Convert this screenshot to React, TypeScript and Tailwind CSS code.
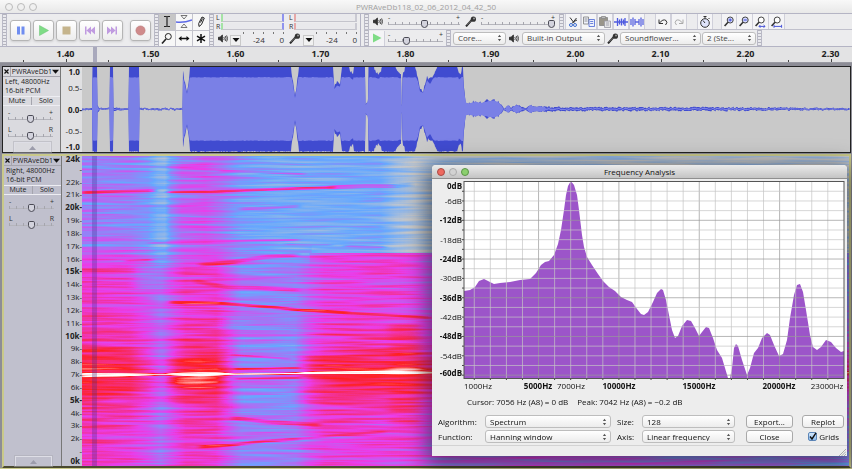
import type { ReactNode } from 'react';
import clsx from 'clsx';

/* ---------- helpers ---------- */

const gray = (v: number) => {
  const c = Math.round(v * 255);
  return `rgb(${c},${c},${c})`;
};

const noise = (n: number) => {
  const s = Math.sin(n * 127.1) * 43758.5453;
  return s - Math.floor(s);
};

/* ---------- small icons ---------- */

function Speaker() {
  return (
    <svg viewBox="0 0 10 9" className="w-[10px] h-[9px] shrink-0" fill="none" stroke="#222" strokeWidth="0.8">
      <path d="M0.5 3.2h1.6L4.4 1v7L2.1 5.8H0.5z" fill="#333" />
      <path d="M5.8 3q1 1.5 0 3M7.2 2q1.7 2.5 0 5M8.6 1.4q2 3.1 0 6.2" />
    </svg>
  );
}

function Mic() {
  return (
    <svg viewBox="0 0 12 11" className="w-[12px] h-[11px] shrink-0">
      <path d="M1 10.4L6.6 4.2" stroke="#222" strokeWidth="2" />
      <path d="M1.6 9.2L6 4.6" stroke="#aaa" strokeWidth="0.6" />
      <circle cx="8.4" cy="3.2" r="2.6" fill="#333" />
      <circle cx="9" cy="2.6" r="1" fill="#999" />
    </svg>
  );
}

function UpDown() {
  return (
    <svg viewBox="0 0 5 8" className="w-[5px] h-[8px] pointer-events-none" fill="#555">
      <path d="M2.5 0.8L4.1 3H0.9zM2.5 7.2L4.1 5H0.9z" />
    </svg>
  );
}

function Lens({ color = '#4a55d8', sign, foot }: { color?: string; sign?: 'plus' | 'minus'; foot?: 'arrows' | 'span' }) {
  return (
    <svg viewBox="0 0 14 14" className="w-[14px] h-[14px]" fill="none">
      <circle cx="8.2" cy="5" r="3" fill={sign ? '#d5daff' : '#fff'} stroke="#444" />
      <path d="M6 7.2L2.6 11" stroke="#333" strokeWidth="1.6" />
      {sign && <path d="M6.6 5h3.2" stroke={color} strokeWidth="1.1" />}
      {sign === 'plus' && <path d="M8.2 3.4v3.2" stroke={color} strokeWidth="1.1" />}
      {foot === 'arrows' && <path d="M6 11.4h6M7.4 10L6 11.4l1.4 1.4M10.6 10l1.4 1.4-1.4 1.4" stroke={color} />}
      {foot === 'span' && <path d="M5 11.4h7.6M5 9.8v3M12.6 9.8v3" stroke={color} />}
    </svg>
  );
}

/* ---------- shared controls ---------- */

function Grip() {
  return (
    <div className="w-[5px] shrink-0 self-stretch border-x border-[#b9b9c6] bg-[repeating-linear-gradient(#b4b4be_0_1px,#e9e9ee_1px_3px)]" />
  );
}

interface SliderProps {
  label: string;
  value: number;
  marks?: [string, string];
  className?: string;
}

function Slider({ label, value, marks = ['-', '+'], className }: SliderProps) {
  return (
    <div className={clsx('flex flex-col', className)}>
      <div className="flex justify-between h-[5px] text-[7px] leading-[5px] font-medium text-[#333]">
        <span>{marks[0]}</span>
        <span>{marks[1]}</span>
      </div>
      <input
        type="range"
        aria-label={label}
        defaultValue={value}
        className="block w-full h-[8px] appearance-none bg-[repeating-linear-gradient(90deg,#a5a5ad_0_1px,transparent_1px_7px),linear-gradient(#b5b5bc,#b5b5bc)] bg-[size:100%_3px,100%_1px] bg-[position:0_2px,0_4px] bg-no-repeat [&::-webkit-slider-thumb]:appearance-none [&::-webkit-slider-thumb]:w-[7px] [&::-webkit-slider-thumb]:h-[8px] [&::-webkit-slider-thumb]:rounded-t-[2px] [&::-webkit-slider-thumb]:rounded-b-[4px] [&::-webkit-slider-thumb]:border [&::-webkit-slider-thumb]:border-[#4a4a55] [&::-webkit-slider-thumb]:bg-[#d3d3dd]"
      />
    </div>
  );
}

interface PickerProps {
  label: string;
  value: string;
  id?: string;
  className?: string;
}

function Picker({ label, value, id, className }: PickerProps) {
  return (
    <div
      className={clsx(
        'grid items-center rounded-[3px] border border-[#bdbdbd] bg-gradient-to-b from-white to-[#ececec] shrink-0',
        className,
      )}
    >
      <select
        id={id}
        aria-label={id ? undefined : label}
        defaultValue={value}
        className="col-start-1 row-start-1 w-full h-full appearance-none bg-transparent pl-[4px] pr-2 leading-none"
      >
        <option>{value}</option>
      </select>
      <div className="col-start-1 row-start-1 justify-self-end pr-[3px] pointer-events-none">
        <UpDown />
      </div>
    </div>
  );
}

/* ---------- toolbars ---------- */

const transport: { label: string; icon: ReactNode }[] = [
  { label: 'Pause', icon: <path d="M4 3.500h3v8H4zM8.500 3.500h3v8h-3z" fill="#6f8df0" /> },
  { label: 'Play', icon: <path d="M3.500 2.500l9 5-9 5z" fill="#7fdc86" stroke="#66c070" strokeWidth="0.5" /> },
  { label: 'Stop', icon: <path d="M3.500 3.500h8v8h-8z" fill="#c5b48c" /> },
  { label: 'Skip to Start', icon: <path d="M3 3.500h1.500v8H3zM9 3.500v8l-4.500-4zM13 3.500v8l-4.500-4z" fill="#c09be0" /> },
  { label: 'Skip to End', icon: <path d="M2 3.500v8l4.500-4zM6 3.500v8l4.500-4zM10.500 3.500H12v8h-1.500z" fill="#c09be0" /> },
  { label: 'Record', icon: <circle cx="7.5" cy="7.5" r="4.6" fill="#cf8a8a" stroke="#bb7777" strokeWidth="0.6" /> },
];

function TransportBar() {
  return (
    <div className="flex items-center shrink-0 pl-[2px]">
      <Grip />
      <div className="flex items-center gap-[2px] pl-[3px] pr-[3px]">
        {transport.map(({ label, icon }) => (
          <button
            key={label}
            aria-label={label}
            className="w-[21px] h-[21px] grid place-items-center rounded-[3px] border border-[#b5b5b5] bg-gradient-to-b from-white to-[#ededed] shadow-sm last:ml-[5px]"
          >
            <svg viewBox="0 0 15 15" className="w-[15px] h-[15px]">{icon}</svg>
          </button>
        ))}
      </div>
    </div>
  );
}

const tools: { label: string; icon: ReactNode }[] = [
  { label: 'Selection', icon: <path d="M5 2.500h2l1 .5 1-.5h2M5 12.500h2l1-.5 1 .5h2M8 3v9" stroke="#222" strokeWidth="1.200" fill="none" /> },
  {
    label: 'Envelope',
    icon: (
      <g fill="none">
        <path d="M5 1.500h6L8 5zM5 13.500h6L8 10z" stroke="#555" strokeWidth="0.8" />
        <path d="M0 8q8 1 16-2" stroke="#5b68e6" strokeWidth="1.600" />
      </g>
    ),
  },
  { label: 'Draw', icon: <path d="M6 12.500l-.3-3L9 3l2.300 1L8.500 10.500zM7.500 8.500l2-4" stroke="#222" fill="none" /> },
  {
    label: 'Zoom',
    icon: (
      <g fill="none" stroke="#222">
        <circle cx="9.300" cy="5.500" r="3" />
        <path d="M7 8l-4 4.500" strokeWidth="1.600" />
      </g>
    ),
  },
  { label: 'Time Shift', icon: <path d="M2.500 7.500L5.500 5v1.800h5V5l3 2.500-3 2.500V8.200h-5V10z" fill="#111" /> },
  { label: 'Multi', icon: <path d="M8 3v9M4 5.200l8 4.600M12 5.200l-8 4.600" stroke="#111" strokeWidth="1.500" /> },
];

function ToolsBar() {
  return (
    <div className="flex shrink-0">
      <Grip />
      <div className="grid grid-cols-3 gap-px bg-[#c4c4cc]">
        {tools.map(({ label, icon }, i) => (
          <button
            key={label}
            aria-label={label}
            className={clsx('w-[16px] grid place-items-center', i === 0 ? 'bg-[#c6c6c6]' : 'bg-[#f7f7f7]')}
          >
            <svg viewBox="0 0 16 15" className="w-[16px] h-[15px]">{icon}</svg>
          </button>
        ))}
      </div>
    </div>
  );
}

function Meter({ label, icon, color }: { label: string; icon: ReactNode; color: 'green' | 'red' }) {
  return (
    <div className="w-[73px] flex flex-col pl-[2px] pr-[3px]">
      {['L', 'R'].map((channel) => (
        <div key={channel} className="flex items-center h-[8px] mb-px text-[7px] leading-none text-[#333]">
          <span className="w-[5px]">{channel}</span>
          <span
            className={clsx(
              'flex-1 h-full border-l-2 border-b border-b-[#c4c4cc] bg-[#e9e9ec] border-r-2',
              color === 'green' ? 'border-l-[#a5e3a5] border-r-[#8f93ee]' : 'border-l-[#e6a8a8] border-r-[#c9c9d2]',
            )}
          />
        </div>
      ))}
      <div className="flex items-end gap-[2px] h-[15px] text-[8px] leading-none text-[#333]">
        <span className="h-[14px] w-[12px] flex items-center justify-end">{icon}</span>
        <button aria-label={`${label} options`} className="w-[11px] h-[11px] grid place-items-center border border-[#c9c9c9] bg-[#f1f1f1]">
          <svg viewBox="0 0 8 6" className="w-[8px] h-[6px]"><path d="M0.500 1h7L4 5z" fill="#111" /></svg>
        </button>
        <div className="flex-1 flex flex-col justify-between h-[14px]">
          <div className="flex justify-between h-[2px]">
            {[0, 1, 2, 3, 4].map((t) => <i key={t} className="w-px bg-[#777]" />)}
          </div>
          <div className="flex justify-between pl-[10px] pb-[2px]">
            <span>-24</span>
            <span>0</span>
          </div>
        </div>
      </div>
    </div>
  );
}

const editIcons: { label: string; gap?: boolean; icon: ReactNode }[] = [
  {
    label: 'Cut',
    icon: (
      <g fill="none">
        <path d="M4 2.500l4.500 6M10.500 3L6 8.500M8 6.500l3-1.500" stroke="#333" />
        <circle cx="5" cy="10" r="1.500" stroke="#3f6fd0" />
        <circle cx="9" cy="10" r="1.500" stroke="#3f6fd0" />
      </g>
    ),
  },
  {
    label: 'Copy',
    icon: (
      <g fill="#eef1fb" stroke="#888" strokeWidth="0.9">
        <path d="M1.500 2h5v7h-5zM2.500 4h3M2.500 6h3" />
        <path d="M7 4.500h5.500v7H7zM8.200 6.500h3M8.200 8.500h3" stroke="#5b75d8" />
      </g>
    ),
  },
  {
    label: 'Paste',
    icon: (
      <g strokeWidth="0.8">
        <path d="M1.500 2.500h8v8h-8z" fill="#99958a" stroke="#858585" />
        <path d="M3.500 1.500h4v2h-4z" fill="#bbb" stroke="#888" />
        <path d="M6.500 6h6v6.500h-6zM8 8h3M8 10h3" fill="#e2e2e4" stroke="#9a9aa5" />
      </g>
    ),
  },
  { label: 'Trim', icon: <path d="M0 7h14M3.500 3v8M5.500 4.500v5M7.500 3.500v7M9.500 4.500v5M11 3v8" stroke="#4f5be0" strokeWidth="1.300" /> },
  { label: 'Silence', icon: <path d="M1 4v6M3 2.500v9M5 4v6M5 7h4M9 4v6M11 2.500v9M13 4v6" stroke="#5b66e0" strokeWidth="1.300" /> },
  { label: 'Undo', gap: true, icon: <path d="M3 4.500v4h4M3.500 8Q7 3.500 10 5.500q2 2-.5 4.500" stroke="#333" fill="none" /> },
  { label: 'Redo', icon: <path d="M11 4.500v4H7M10.500 8Q7 3.500 4 5.500q-2 2 .5 4.500" stroke="#aaa" fill="none" /> },
  {
    label: 'Sync-Lock',
    gap: true,
    icon: (
      <g fill="none" stroke="#333">
        <circle cx="7" cy="8" r="4.300" fill="#dfe4fb" />
        <path d="M7 3.500V1.500M5.500 1.500h3M10.500 4l1-1M7 8L5 5.500" />
      </g>
    ),
  },
];

function EditBar() {
  return (
    <div className="flex items-stretch">
      {editIcons.map(({ label, gap, icon }) => (
        <button
          key={label}
          aria-label={label}
          className={clsx('w-[16px] grid place-items-center border-x border-[#d0d0da] bg-[#f4f4f6]', gap && 'ml-[10px]')}
        >
          <svg viewBox="0 0 14 14" className="w-[14px] h-[14px]">{icon}</svg>
        </button>
      ))}
      <button aria-label="Zoom In" className="w-[16px] ml-[8px] border-x border-[#d0d0da] bg-[#f4f4f6]"><Lens sign="plus" /></button>
      <button aria-label="Zoom Out" className="w-[16px] border-r border-[#d0d0da] bg-[#f4f4f6]"><Lens sign="minus" /></button>
      <button aria-label="Fit Selection" className="w-[16px] border-r border-[#d0d0da] bg-[#f4f4f6]"><Lens foot="arrows" /></button>
      <button aria-label="Fit Project" className="w-[16px] border-r border-[#d0d0da] bg-[#f4f4f6]"><Lens foot="span" /></button>
    </div>
  );
}

function Toolbars() {
  return (
    <div className="flex h-[34px] border-y border-[#b4b4c4] bg-[#ececee] overflow-hidden">
      <TransportBar />
      <ToolsBar />
      <div className="flex shrink-0">
        <Grip />
        <Meter label="Output meter" icon={<Speaker />} color="green" />
        <Meter label="Input meter" icon={<Mic />} color="red" />
      </div>
      <div className="flex-1 flex flex-col border-l border-[#b4b4c4] pl-[3px]">
        <div className="flex items-center h-[16px] border-b border-[#c0c0cc]">
          <Grip />
          <div className="flex items-center pl-[4px]">
            <Speaker />
            <Slider label="Output volume" value={50} className="w-[72px] ml-[5px]" />
            <div className="ml-[5px]"><Mic /></div>
            <Slider label="Input volume" value={100} className="w-[74px] ml-[4px] mr-[4px]" />
          </div>
          <Grip />
          <div className="flex self-stretch pl-px">
            <EditBar />
          </div>
        </div>
        <div className="flex items-center h-[16px] text-[8px] text-[#444]">
          <Grip />
          <button aria-label="Play at speed" className="w-[16px] h-[15px] grid place-items-center border-r border-[#d0d0da] bg-[#f4f4f6]">
            <svg viewBox="0 0 10 10" className="w-[10px] h-[10px]"><path d="M1 0.500l8.500 4.500L1 9.500z" fill="#7fdc86" /></svg>
          </button>
          <Slider label="Playback speed" value={32} className="w-[55px] mx-[3px]" />
          <Grip />
          <Picker label="Audio host" value="Core..." className="w-[53px] h-[13px] ml-[2px]" />
          <div className="w-[16px] flex justify-center"><Speaker /></div>
          <Picker label="Output device" value="Built-in Output" className="w-[83px] h-[13px]" />
          <div className="w-[15px] flex justify-center"><Mic /></div>
          <Picker label="Input device" value="Soundflower..." className="w-[81px] h-[13px]" />
          <Picker label="Input channels" value="2 (Ste..." className="w-[54px] h-[13px] ml-px mr-px" />
          <Grip />
        </div>
      </div>
    </div>
  );
}

/* ---------- time ruler ---------- */

const times = ['1.40', '1.50', '1.60', '1.70', '1.80', '1.90', '2.00', '2.10', '2.20', '2.30'];

function TimeRuler() {
  return (
    <div className="relative flex h-[16px] pl-[23px] overflow-hidden bg-[#e3e3e4] border-b border-[#9a9aa2]">
      {times.map((time) => (
        <div key={time} className="w-[85px] shrink-0 flex flex-col justify-between">
          <span className="text-center text-[9px] leading-[14px] h-[12px] font-bold text-[#222]">{time}</span>
          <div className="flex items-end justify-between">
            <i className="w-px h-[2px] bg-[#444]" />
            <i className="w-px h-[3px] bg-[#444]" />
            <i />
          </div>
        </div>
      ))}
      <div className="absolute left-[93px] top-0 w-[4px] h-full bg-[#a9a9bc]" />
    </div>
  );
}

/* ---------- tracks ---------- */

interface TrackPanelProps {
  channel: string;
  selected?: boolean;
}

function TrackPanel({ channel, selected }: TrackPanelProps) {
  return (
    <div
      className={clsx(
        'w-[58px] shrink-0 flex flex-col text-[8px] leading-[10px] text-[#222] border-r border-[#777]',
        selected ? 'bg-[#c0c0cd]' : 'bg-[#dadadf]',
      )}
    >
      <div className="flex items-center h-[10px] border-b border-[#a5a5ae]">
        <button aria-label="Close track" className="w-[10px] h-full grid place-items-center border-r border-[#a5a5ae]">
          <svg viewBox="0 0 5 5" className="w-[5px] h-[5px]"><path d="M0.500 0.500l4 4M4.500 0.500l-4 4" stroke="#111" strokeWidth="1.200" /></svg>
        </button>
        <button className="flex-1 flex items-center justify-between px-px text-[7px]">
          PWRAveDb1
          <svg viewBox="0 0 8 5" className="w-[7px] h-[5px]"><path d="M0 0.500h8L4 5z" fill="#111" /></svg>
        </button>
      </div>
      <div className="flex flex-col pl-[2px] text-[7px] leading-[9px] h-[19px]">
        <span>{channel}, 48000Hz</span>
        <span>16-bit PCM</span>
      </div>
      <div className="flex border-y border-[#ededf2] text-[7px]">
        <button className="flex-1 h-[8px] leading-[8px] border-r border-[#a5a5ae]">Mute</button>
        <button className="flex-1 h-[8px] leading-[8px]">Solo</button>
      </div>
      <Slider label={`${channel} gain`} value={50} className="w-[45px] ml-[5px] mt-[4px]" />
      <Slider label={`${channel} pan`} value={50} marks={['L', 'R']} className="w-[45px] ml-[5px] mt-[4px]" />
      <button
        aria-label="Collapse track"
        className="w-[37px] h-[10px] mt-auto ml-[11px] grid place-items-center border border-[#dedee6] border-b-0 outline outline-[#a9a9b4]/50"
      >
        <svg viewBox="0 0 7 4" className="w-[7px] h-[4px]"><path d="M3.500 0L7 4H0z" fill="#9c9cab" /></svg>
      </button>
    </div>
  );
}

/* half-height of the signal, in pixels either side of zero */
const envelope: [number, number][] = [
  [82, 1], [92, 1], [92.5, 43], [97, 43], [97.5, 4], [100, 1], [109.5, 1], [110, 43], [113, 43], [113.5, 2],
  [122, 1], [128.5, 1], [129, 43], [139, 43], [139.5, 1], [182.5, 1], [183, 39], [185, 29], [187, 19], [189, 32], [190, 43],
  [291, 43], [293, 30], [295, 14], [297, 27], [299, 43], [333, 43], [334.5, 25], [337, 29], [340, 28],
  [342, 43], [349, 43], [351, 38], [353, 36], [354, 43], [365, 43], [365.5, 5], [368, 10], [368.5, 43],
  [374, 43], [376, 38], [379, 37], [382, 43], [395, 43], [399, 38], [401, 38], [401.3, 5], [402, 5],
  [402.6, 38], [405, 43], [415, 43], [418, 34], [420, 22], [423, 20], [427, 35], [430, 31], [433, 37],
  [438, 43], [457, 43], [459, 36], [461, 38], [462, 43], [463, 42], [464, 22], [466, 8], [468, 7], [475, 9],
  [482, 8], [488, 10], [493, 11], [498, 9], [501, 5], [504, 1], [508, 5], [511, 2], [517, 5], [521, 3],
  [526, 1], [530, 5], [535, 3], [545, 3], [560, 2], [700, 2], [850, 1],
];

function amplitude(x: number) {
  const i = envelope.findIndex(([px]) => px > x);
  if (i <= 0) return envelope[envelope.length - 1][1];
  const [x0, a0] = envelope[i - 1];
  const [x1, a1] = envelope[i];
  return a0 + ((a1 - a0) * (x - x0)) / (x1 - x0);
}

function outline(height: (x: number) => number) {
  const top: string[] = [];
  const bottom: string[] = [];
  for (let x = 82; x < 850; x += 0.5) {
    const h = height(x);
    const drift = amplitude(x) < 3 ? (noise(Math.floor(x / 2)) - 0.5) * 1.4 : 0;
    top.push(`${x} ${(109 - h + drift).toFixed(1)}`);
    bottom.unshift(`${x} ${(109 + h + drift).toFixed(1)}`);
  }
  return `M${top.join('L')}L${bottom.join('L')}z`;
}

const peakPath = outline((x) => {
  const a = amplitude(x);
  const jitter = a > 12 ? (a < 42 ? 4 : 1) : a * 0.4;
  return Math.max(0.6, a - noise(Math.floor(x)) * jitter);
});

const rmsPath = outline((x) => {
  const a = amplitude(x);
  return a < 3 ? a * 0.3 : Math.min(32, a * 0.82) - noise(Math.floor(x / 2) + 9) * 0.6;
});

function Waveform() {
  return (
    <svg viewBox="82 67 768 85" preserveAspectRatio="none" className="flex-1 min-w-0 h-[85px] bg-[#c9c9c9]">
      <path d={peakPath} fill="#404bd0" />
      <path d={rmsPath} fill="#7a80e6" />
    </svg>
  );
}

/* horizontal level profiles: [x, level] */
const upperLevels: [number, number][] = [
  [82, 0.37], [130, 0.34], [148, 0.29], [158, 0.19], [165, 0.17], [171, 0.3], [182, 0.4], [205, 0.44],
  [222, 0.38], [240, 0.29], [280, 0.22], [350, 0.23], [380, 0.22], [396, 0.12], [415, 0.05], [432, 0.08], [850, 0.05],
];
const lowerLevels: [number, number][] = [
  [82, 0.54], [130, 0.51], [148, 0.45], [161, 0.38], [172, 0.45], [186, 0.53], [216, 0.53], [230, 0.44],
  [242, 0.36], [296, 0.35], [310, 0.43], [325, 0.49], [350, 0.5], [418, 0.49], [432, 0.42], [600, 0.42], [850, 0.32],
];
const glowLevels: [number, number][] = [
  [82, 1], [130, 0.8], [156, 0.25], [164, 0.15], [178, 0.7], [200, 1], [216, 0.9], [234, 0.2], [294, 0.15], [315, 0.7],
  [340, 0.9], [400, 0.9], [432, 0.8], [850, 0.8],
];

function Levels({ id, points }: { id: string; points: [number, number][] }) {
  return (
    <linearGradient id={id} gradientUnits="userSpaceOnUse" x1="82" x2="850" y1="0" y2="0">
      {points.map(([x, v]) => <stop key={x} offset={(x - 82) / 768} stopColor={gray(v)} />)}
    </linearGradient>
  );
}

/* [path, width, strength] */
const sweeps: [string, number, number][] = [
  ['M82 192.500L125 191L155 190.500', 3, 0.45],
  ['M168 192L215 191.500L280 189L335 187.500', 2.5, 0.45],
  ['M330 187.500L365 186L395 186', 4, 0.25],
  ['M395 186L412 184.500', 4, 0.15],
  ['M220 171L260 172L305 174', 2.5, 0.22],
  ['M240 209L280 207L300 206', 3, 0.22],
  ['M150 243L235 241L298 240', 2, 0.22],
  ['M285 244L332 245', 1.5, 0.22],
  ['M345 246L385 247', 2, 0.25],
  ['M125 261L152 260', 2, 0.35],
  ['M82 265L110 265', 3, 0.2],
  ['M200 265L232 262L265 257L298 255', 4, 0.28],
  ['M195 281L225 287L260 288L300 290', 4, 0.25],
  ['M170 302L215 303L270 307L300 310L350 313', 3, 0.5],
  ['M350 313L385 315L432 318', 2.5, 0.35],
  ['M310 319L350 319', 2, 0.3],
  ['M110 305L160 305', 2, 0.25],
  ['M232 355L290 359', 2, 0.3],
  ['M235 369L300 368', 2, 0.45],
  ['M235 379L300 378', 2, 0.4],
  ['M232 418L270 422L320 425', 4, 0.3],
  ['M200 447L232 445L265 441L300 439', 3, 0.4],
  ['M300 439L340 435L385 432', 2.5, 0.22],
  ['M82 400L110 399', 2, 0.2],
  ['M355 264L385 264', 2, 0.2],
  ['M100 466L140 466', 2, 0.4],
];

function Spectrogram() {
  return (
    <svg viewBox="82 156 768 310" preserveAspectRatio="none" className="absolute inset-0 w-full h-full">
      <defs>
        <Levels id="upper" points={upperLevels} />
        <Levels id="lower" points={lowerLevels} />
        <Levels id="glow-x" points={glowLevels} />
        <linearGradient id="fade" x1="0" x2="0" y1="0" y2="1">
          <stop offset="0" stopColor="#000" />
          <stop offset="0.12" stopColor="#fff" />
        </linearGradient>
        <linearGradient id="glow" x1="0" x2="0" y1="0" y2="1">
          <stop offset="0" stopColor="#fff" stopOpacity="0" />
          <stop offset="0.3" stopColor="#fff" stopOpacity="0.18" />
          <stop offset="0.42" stopColor="#fff" stopOpacity="0.42" />
          <stop offset="0.5" stopColor="#fff" stopOpacity="0.52" />
          <stop offset="0.58" stopColor="#fff" stopOpacity="0.42" />
          <stop offset="0.72" stopColor="#fff" stopOpacity="0.16" />
          <stop offset="1" stopColor="#fff" stopOpacity="0" />
        </linearGradient>
        <mask id="lower-mask" maskUnits="userSpaceOnUse" x="82" y="156" width="768" height="310">
          <rect x="82" y="243" width="230" height="223" fill="url(#fade)" />
          <rect x="310" y="253" width="540" height="213" fill="#fff" />
        </mask>
        <mask id="glow-mask" maskUnits="userSpaceOnUse" x="82" y="156" width="768" height="310">
          <rect x="82" y="156" width="768" height="310" fill="url(#glow-x)" />
        </mask>
        <filter id="soft" x="-20%" y="-300%" width="140%" height="700%" filterUnits="objectBoundingBox">
          <feGaussianBlur stdDeviation="3 0.7" />
        </filter>
        <filter id="softer" x="-20%" y="-50%" width="140%" height="200%">
          <feGaussianBlur stdDeviation="5 2" />
        </filter>
        {/* level + streaky noise, mapped through the gray-blue-magenta-red-white colour ramp */}
        <filter id="ramp" filterUnits="userSpaceOnUse" x="82" y="156" width="768" height="310" colorInterpolationFilters="sRGB">
          <feTurbulence type="fractalNoise" baseFrequency="0.014 0.38" numOctaves="2" seed="7" />
          <feColorMatrix values="1 0 0 0 0  1 0 0 0 0  1 0 0 0 0  0 0 0 0 1" result="streaks" />
          <feComposite in="SourceGraphic" in2="streaks" operator="arithmetic" k1="0" k2="1" k3="0.38" k4="-0.19" />
          <feColorMatrix values="1 0 0 0 0  0 1 0 0 0  0 0 1 0 0  0 0 0 0 1" />
          <feComponentTransfer>
            <feFuncR type="table" tableValues="0.79 0.4 0.92 1 1" />
            <feFuncG type="table" tableValues="0.79 0.66 0.24 0.13 1" />
            <feFuncB type="table" tableValues="0.79 1 0.92 0.12 1" />
          </feComponentTransfer>
        </filter>
      </defs>
      <g filter="url(#ramp)">
        <rect x="82" y="156" width="768" height="310" fill="url(#upper)" />
        <rect x="82" y="156" width="768" height="310" fill="url(#lower)" mask="url(#lower-mask)" />
        <g filter="url(#softer)">
          <rect x="138" y="266" width="26" height="24" fill={gray(0.34)} opacity="0.7" />
          <rect x="238" y="338" width="60" height="30" fill={gray(0.24)} opacity="0.6" />
          <rect x="238" y="386" width="58" height="24" fill={gray(0.24)} opacity="0.6" />
          <rect x="235" y="292" width="62" height="10" fill={gray(0.28)} opacity="0.6" />
          <rect x="228" y="316" width="64" height="12" fill={gray(0.28)} opacity="0.5" />
        </g>
        <rect x="82" y="306" width="768" height="136" fill="url(#glow)" mask="url(#glow-mask)" />
        <g filter="url(#softer)" fill="#fff">
          {[326, 335, 344, 354, 389, 398, 408, 420].map((y) => (
            <rect key={y} x="390" y={y} width="28" height="4" opacity="0.3" />
          ))}
          <ellipse cx="196" cy="380" rx="26" ry="5" opacity="0.3" />
          <ellipse cx="405" cy="371" rx="18" ry="5" opacity="0.5" />
        </g>
        {sweeps.map(([d, width, strength]) => (
          <path key={d} d={d} fill="none" stroke="#fff" strokeWidth={width} opacity={strength} filter="url(#soft)" />
        ))}
        <g filter="url(#soft)">
          <path d="M82 372.500L120 373L150 373.500L163 374L172 373L200 372L222 372.500L234 373.500L300 372.500L312 371.500L350 371L400 370.500L432 371.500L850 371.500L850 373.500L432 373.500L400 374L350 374L312 374L300 374L234 375L222 375.500L200 376.500L172 375.500L163 375L150 375.500L120 376.500L82 377z" fill="#fff" />
        </g>
        <path d="M82 374.500H150L163 374.500L180 374L230 374.500L300 373.500L330 372.500L432 372.500H850" stroke="#fff" strokeWidth="1.500" fill="none" opacity="0.9" />
      </g>
    </svg>
  );
}

const khz = Array.from({ length: 25 }, (_, i) => 24 - i);

function Tracks() {
  return (
    <div className="flex-1 flex flex-col bg-[#8d8d96] pt-[3px]">
      <div className="flex ml-[2px] mr-px border border-[#222] h-[87px]">
        <TrackPanel channel="Left" />
        <div className="w-[21px] shrink-0 flex flex-col bg-[#e0e0e2] text-right text-[8px] leading-[10px] text-[#222]">
          <b className="h-[10px]">1.0&nbsp;</b>
          <span className="flex-1 flex items-center justify-end">0.5-</span>
          <b className="flex-1 flex items-center justify-end">0.0-</b>
          <span className="flex-1 flex items-center justify-end">-0.5-</span>
          <b className="h-[10px]">-1.0&nbsp;</b>
        </div>
        <Waveform />
      </div>
      <div className="flex-1 flex mt-px ml-[2px] mr-px border-2 border-[#c9c98a] border-b-[#4a4a30]">
        <TrackPanel channel="Right" selected />
        <div className="w-[20px] shrink-0 flex flex-col bg-[#c3c3cf] text-[8px] leading-[8px] text-[#222] pb-[2px]">
          {khz.map((k) => (
            <div
              key={k}
              className={clsx(
                'flex items-center justify-end min-h-0 h-0',
                k === 24 || k === 0 ? 'grow' : 'grow-2',
                (k % 5 === 0 || k === 24) && 'font-bold',
              )}
            >
              <span className="whitespace-nowrap">
                {k === 23 || k === 1 ? '' : `${k}k`}
                {k === 24 || k === 0 ? <>&nbsp;</> : '-'}
              </span>
            </div>
          ))}
        </div>
        <div className="relative flex-1 overflow-hidden">
          <Spectrogram />
          <div className="absolute left-[10px] top-0 w-[5px] h-full bg-[#3a2a8a]/30" />
        </div>
      </div>
      <div className="h-px bg-[#c9c98a]" />
    </div>
  );
}

/* ---------- frequency analysis window ---------- */

const spectrum =
  '464,291 470,290 475,287 479,281 484,279 488,281 494,284 500,283 510,282 520,280 530,279 536,273 541,265 545,262 549,261 554,255 558,244 561,230 564,210 566,195 568,186 570,182.500 571.500,182 574,185 577,195 579,210 582,235 584,247 587,257 592,265 598,274 603,281 609,287 615,291 621,297 627,300 632,302 637,309 641,314 644,315 648,312 653,302 657,293 661,289 663,290 666,300 669,315 672,330 675,338 678,336 682,326 687,320 691,321 695,328 699,336 702,332 706,327 709,328 713,338 717,350 722,358 725,368 728,378 730,378 732,368 734,348 736,344 738,346 742,360 747,375 750,368 754,353 758,348 762,338 767,333 770,335 774,345 779,356 783,354 787,340 790,318 794,295 797,285 800,284 803,292 806,310 810,335 813,347 817,350 821,347 826,340 831,342 836,348 841,352 844,351';

const freqX = (k: number) => 458.2 + 16.07 * k;
const levelY = (db: number) => 181.6 - db * 3.226;

const freqLabels: [string, number, boolean][] = [
  ['1000Hz', 478, false], ['5000Hz', 538, true], ['7000Hz', 571, false], ['10000Hz', 619, true],
  ['15000Hz', 699, true], ['20000Hz', 779, true], ['23000Hz', 827, false],
];

function SpectrumChart() {
  const columns = Array.from({ length: 23 }, (_, i) => i + 1);
  const rows = Array.from({ length: 20 }, (_, i) => -3 * (i + 1));
  const labels = Array.from({ length: 11 }, (_, i) => -6 * i);
  return (
    <svg viewBox="432 179 415 213" className="w-full text-[8px]" fill="#111">
      <rect x="464" y="181" width="380" height="197" fill="#fff" />
      <polygon points={`464,378 ${spectrum} 844,378`} fill="#9c55c9" />
      {columns.map((k) => (
        <path key={k} d={`M${freqX(k)} 181V378`} stroke={k % 5 === 0 ? '#999' : '#c6c6c6'} opacity="0.7" />
      ))}
      {columns.map((k) => <path key={k} d={`M${freqX(k)} 378v2`} stroke="#444" />)}
      {rows.map((db) => (
        <path key={db} d={`M464 ${levelY(db)}H844`} stroke={db % 12 === 0 ? '#999' : '#c6c6c6'} opacity="0.7" />
      ))}
      {rows.map((db) => <path key={db} d={`M462 ${levelY(db)}h2`} stroke="#444" />)}
      <rect x="464" y="181.500" width="380" height="197" fill="none" stroke="#555" />
      {labels.map((db) => (
        <text
          key={db}
          x="462"
          y={(db === 0 ? 186 : db === -60 ? 373 : levelY(db)) + 3}
          textAnchor="end"
          fontWeight={db % 12 === 0 ? 700 : 500}
        >
          {db}dB
        </text>
      ))}
      {freqLabels.map(([label, x, bold]) => (
        <text key={label} x={x} y="389" textAnchor="middle" fontWeight={bold ? 700 : 500}>{label}</text>
      ))}
    </svg>
  );
}

const pushButton = 'h-[13px] rounded-[3px] border border-[#a9a9a9] bg-gradient-to-b from-white to-[#efefef] leading-none';

function FrequencyWindow() {
  return (
    <section className="absolute right-[5px] bottom-[13px] w-[415px] h-[291px] flex flex-col rounded-t-[4px] overflow-hidden bg-[#ededed] text-[8px] text-[#111] shadow-[0_6px_22px_6px_rgba(0,0,0,0.5)]">
      <header className="flex items-center h-[14px] px-[5px] bg-gradient-to-b from-[#ebebeb] to-[#c4c4c4] border-b border-[#8f8f8f]">
        <div className="flex gap-[4px] flex-1">
          <button aria-label="Close window" className="w-[8px] h-[8px] rounded-full border border-[#a84a45] bg-[#ee6a60]" />
          <button aria-label="Minimize window" className="w-[8px] h-[8px] rounded-full border border-[#aaa] bg-[#d2d2d2]" />
          <button aria-label="Zoom window" className="w-[8px] h-[8px] rounded-full border border-[#5a9248] bg-[#8bcf6e]" />
        </div>
        <h2>Frequency Analysis</h2>
        <div className="flex-1" />
      </header>
      <SpectrumChart />
      <p className="flex gap-[9px] pl-[35px] pt-[4px] leading-[11px] h-[23px]">
        <span>Cursor: 7056 Hz (A8) = 0 dB</span>
        <span>Peak: 7042 Hz (A8) = −0.2 dB</span>
      </p>
      <form className="grid grid-cols-[47px_126px_31px_93px_58px_51px] gap-y-[2px] items-center pl-[6px] pb-[2px]">
        <label htmlFor="algorithm">Algorithm:</label>
        <Picker id="algorithm" label="Algorithm" value="Spectrum" className="h-[13px]" />
        <label htmlFor="size" className="pl-[6px]">Size:</label>
        <Picker id="size" label="Size" value="128" className="h-[13px]" />
        <button type="button" className={clsx(pushButton, 'ml-[11px]')}>Export...</button>
        <button type="button" className={clsx(pushButton, 'ml-[9px]')}>Replot</button>
        <label htmlFor="function">Function:</label>
        <Picker id="function" label="Function" value="Hanning window" className="h-[13px]" />
        <label htmlFor="axis" className="pl-[6px]">Axis:</label>
        <Picker id="axis" label="Axis" value="Linear frequency" className="h-[13px]" />
        <button type="button" className={clsx(pushButton, 'ml-[11px]')}>Close</button>
        <label className="flex items-center justify-end gap-[2px] pr-[5px]">
          <span className="grid place-items-center">
            <input
              type="checkbox"
              defaultChecked
              className="col-start-1 row-start-1 appearance-none w-[9px] h-[9px] rounded-[2px] border border-[#5c86b8] bg-gradient-to-b from-[#d5e8fb] to-[#8dbdf0]"
            />
            <svg viewBox="0 0 9 9" className="col-start-1 row-start-1 w-[9px] h-[9px] pointer-events-none" fill="none">
              <path d="M2 4.500l2 2.500L8 0.800" stroke="#111" strokeWidth="1.400" />
            </svg>
          </span>
          Grids
        </label>
      </form>
      <footer className="flex-1 flex items-end justify-end border-t border-[#d3d3d3] pr-px">
        <svg viewBox="0 0 7 7" className="w-[7px] h-[7px]" stroke="#999" strokeWidth="0.800">
          <path d="M0 7L7 0M2.500 7L7 2.500M5 7L7 5" />
        </svg>
      </footer>
    </section>
  );
}

export default function App() {
  return (
    <main className="relative min-h-screen flex flex-col overflow-hidden bg-[#ececee] font-['Open_Sans','Noto_Sans',sans-serif] font-medium">
      <header className="flex items-center h-[13px] px-[5px] bg-gradient-to-b from-[#f8f8f8] to-[#e8e8e8]">
        <div className="flex gap-[4px] flex-1">
          {['Close', 'Minimize', 'Zoom'].map((label) => (
            <button key={label} aria-label={label} className="w-[8px] h-[8px] rounded-full border border-[#bbb] bg-[#f0f0f0]" />
          ))}
        </div>
        <h1 className="text-[8px] leading-none text-[#a0a0a0]">PWRAveDb118_02_06_2012_04_42_50</h1>
        <div className="flex-1" />
      </header>
      <Toolbars />
      <TimeRuler />
      <Tracks />
      <FrequencyWindow />
    </main>
  );
}
